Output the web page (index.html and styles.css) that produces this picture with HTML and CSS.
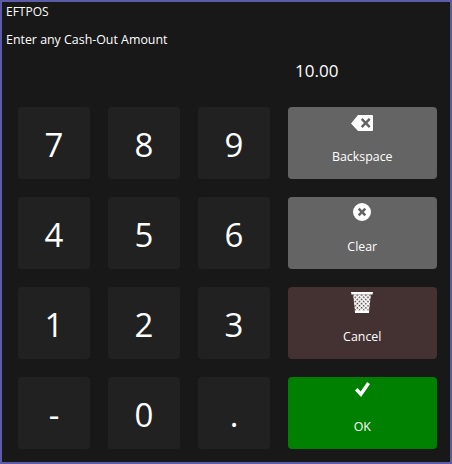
FILE: index.html
```html
<!DOCTYPE html>
<html lang="en">
<head>
    <meta charset="UTF-8">
    <title>EFTPOS</title>
    <link rel="stylesheet" href="styles.css">
</head>
<body>
    <div class="window">
        <div class="title">EFTPOS</div>
        <div class="prompt">Enter any Cash-Out Amount</div>
        <div class="amount">10.00</div>

        <div class="keypad">
            <button class="key">7</button>
            <button class="key">8</button>
            <button class="key">9</button>
            <button class="action grey">
                <svg class="icon icon-back" viewBox="0 0 22 16"><path fill="#fff" fill-rule="evenodd" d="M7 0H21a1 1 0 0 1 1 1V15a1 1 0 0 1-1 1H7L0 8.500ZM9.800 4.800 12.900 8 9.800 11.200 11.600 13 14.700 9.800 17.800 13 19.600 11.200 16.500 8 19.600 4.800 17.800 3 14.700 6.200 11.600 3Z"/></svg>
                <span>Backspace</span>
            </button>

            <button class="key">4</button>
            <button class="key">5</button>
            <button class="key">6</button>
            <button class="action grey">
                <svg class="icon icon-clear" viewBox="0 0 18 18"><path fill="#fff" fill-rule="evenodd" d="M9 0a9 9 0 1 1 0 18A9 9 0 0 1 9 0ZM4.800 6.600 7.200 9 4.800 11.400 6.600 13.200 9 10.800 11.400 13.200 13.200 11.400 10.800 9 13.200 6.600 11.400 4.800 9 7.200 6.600 4.800Z"/></svg>
                <span>Clear</span>
            </button>

            <button class="key">1</button>
            <button class="key">2</button>
            <button class="key">3</button>
            <button class="action brown">
                <svg class="icon icon-bin" viewBox="0 0 22 21">
                    <defs>
                        <pattern id="mesh" width="3" height="3" patternUnits="userSpaceOnUse" patternTransform="rotate(45)">
                            <rect width="3" height="3" fill="#fff"/>
                            <rect width="1.500" height="1.500" fill="#443232"/>
                        </pattern>
                    </defs>
                    <path fill="#fff" d="M0 0H22L21.500 2.500H.5Z"/>
                    <path fill="url(#mesh)" d="M2 2.500H20L18 19H4Z"/>
                    <path fill="#fff" d="M3.800 18.500H18.200L18 21H4Z"/>
                </svg>
                <span>Cancel</span>
            </button>

            <button class="key">-</button>
            <button class="key">0</button>
            <button class="key">.</button>
            <button class="action green">
                <svg class="icon icon-ok" viewBox="0 0 16 16"><path fill="#fff" d="M0 9 2.800 6.500 6 10 13 0 16 2 6.500 16Z"/></svg>
                <span>OK</span>
            </button>
        </div>
    </div>
</body>
</html>
```

FILE: styles.css
```css
html, body {
    margin: 0;
    padding: 0;
}

body {
    width: 452px;
    height: 464px;
    overflow: hidden;
    font-family: "Open Sans", "Noto Sans", sans-serif;
    color: #fff;
}

.window {
    box-sizing: border-box;
    width: 452px;
    height: 464px;
    border: 2px solid #5b5ba8;
    background-color: #181818;
    padding: 0 14px 0 16px;
}

.title {
    margin-left: -12px;
    margin-top: 2px;
    font-size: 12px;
    line-height: 16px;
}

.prompt {
    margin-left: -12px;
    margin-top: 12px;
    font-size: 12.4px;
    line-height: 16px;
}

.amount {
    margin-top: 12px;
    padding-left: 277px;
    font-size: 17px;
    line-height: 22px;
}

.keypad {
    display: grid;
    grid-template-columns: 72px 72px 72px 149px;
    grid-auto-rows: 72px;
    gap: 18px 18px;
    margin-top: 25px;
}

.key {
    border: none;
    border-radius: 3px;
    padding: 2px 0 0;
    background-color: #212121;
    color: #fff;
    font-family: inherit;
    font-size: 33px;
}

.action {
    display: flex;
    flex-direction: column;
    align-items: center;
    position: relative;
    margin-left: -0.5px;
    border: none;
    border-radius: 4px;
    padding: 0;
    color: #fff;
    font-family: inherit;
    font-size: 12.4px;
}

.action span {
    position: absolute;
    top: 42px;
    line-height: 16px;
}

.icon {
    display: block;
}

.icon-back {
    margin-top: 8px;
    width: 22px;
    height: 16px;
}

.icon-clear {
    margin-top: 6px;
    width: 18px;
    height: 18px;
}

.icon-bin {
    margin-top: 5px;
    width: 22px;
    height: 21px;
}

.icon-ok {
    margin-top: 5px;
    width: 15px;
    height: 15px;
}

.grey {
    background-color: #646464;
}

.brown {
    background-color: #443232;
}

.green {
    background-color: #008000;
}
```
